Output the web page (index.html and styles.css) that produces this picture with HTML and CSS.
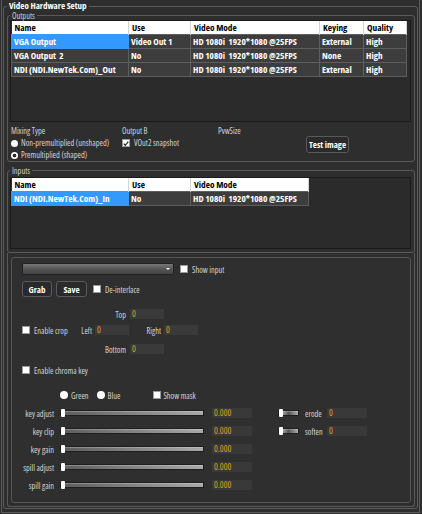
FILE: index.html
```html
<!DOCTYPE html>
<html lang="en">
<head>
  <meta charset="UTF-8" />
  <title>Video Hardware Setup</title>
  <link rel="stylesheet" href="styles.css">
</head>
<body>
  <div class="window">
    <fieldset class="setup">
      <legend>Video Hardware Setup</legend>

      <fieldset class="group outputs">
        <legend>Outputs</legend>
        <div class="grid-box outputs-box">
          <table class="grid grid-out">
            <thead>
              <tr>
                <th class="c-name">Name</th>
                <th class="c-use">Use</th>
                <th class="c-mode">Video Mode</th>
                <th class="c-key">Keying</th>
                <th class="c-quality">Quality</th>
              </tr>
            </thead>
            <tbody>
              <tr>
                <td class="selected">VGA Output</td>
                <td>Video Out 1</td>
                <td>HD 1080i&nbsp; 1920*1080 @25FPS</td>
                <td>External</td>
                <td>High</td>
              </tr>
              <tr>
                <td>VGA Output&nbsp; 2</td>
                <td>No</td>
                <td>HD 1080i&nbsp; 1920*1080 @25FPS</td>
                <td>None</td>
                <td>High</td>
              </tr>
              <tr>
                <td>NDI (NDI.NewTek.Com)_Out</td>
                <td>No</td>
                <td>HD 1080i&nbsp; 1920*1080 @25FPS</td>
                <td>External</td>
                <td>High</td>
              </tr>
            </tbody>
          </table>
        </div>

        <div class="mix-options">
          <div class="opt-col mixing">
            <div class="opt-title">Mixing Type</div>
            <div class="opt-row"><span class="radio"></span>Non-premultiplied (unshaped)</div>
            <div class="opt-row"><span class="radio on"></span>Premultiplied (shaped)</div>
          </div>
          <div class="opt-col output-b">
            <div class="opt-title">Output B</div>
            <div class="opt-row">
              <span class="check">
                <svg width="7" height="7" viewBox="0 0 7 7"><path d="M0.8 3.6 L2.7 5.6 L6.2 1.2" fill="none" stroke="#222" stroke-width="1.4"/></svg>
              </span>VOut2 snapshot
            </div>
          </div>
          <div class="opt-col pvw">
            <div class="opt-title">PvwSize</div>
          </div>
          <button class="btn test-btn">Test image</button>
        </div>
      </fieldset>

      <fieldset class="group inputs">
        <legend>Inputs</legend>
        <div class="grid-box inputs-box">
          <table class="grid grid-in">
            <thead>
              <tr>
                <th class="c-name">Name</th>
                <th class="c-use">Use</th>
                <th class="c-mode2">Video Mode</th>
              </tr>
            </thead>
            <tbody>
              <tr>
                <td class="selected">NDI (NDI.NewTek.Com)_In</td>
                <td>No</td>
                <td>HD 1080i&nbsp; 1920*1080 @25FPS</td>
              </tr>
            </tbody>
          </table>
        </div>
      </fieldset>

      <div class="frame">
        <div class="panel">
          <div class="row source-row">
            <div class="combo"><span class="arrow"></span></div>
            <span class="check"></span><span class="lbl">Show input</span>
          </div>

          <div class="row button-row">
            <button class="btn">Grab</button>
            <button class="btn">Save</button>
            <span class="check"></span><span class="lbl">De-interlace</span>
          </div>

          <div class="row crop-top">
            <span class="field-label wide">Top</span>
            <span class="num">0</span>
          </div>
          <div class="row crop-mid">
            <span class="check"></span><span class="lbl crop-lbl">Enable crop</span>
            <span class="field-label left-lbl">Left</span>
            <span class="num">0</span>
            <span class="field-label right-lbl">Right</span>
            <span class="num">0</span>
          </div>
          <div class="row crop-bottom">
            <span class="field-label wide">Bottom</span>
            <span class="num">0</span>
          </div>

          <div class="row chroma-row">
            <span class="check"></span><span class="lbl">Enable chroma key</span>
          </div>

          <div class="row color-row">
            <span class="radio"></span><span class="lbl">Green</span>
            <span class="radio blue"></span><span class="lbl">Blue</span>
            <span class="check mask"></span><span class="lbl">Show mask</span>
          </div>

          <div class="sliders">
            <div class="slider-row">
              <span class="slider-label">key adjust</span>
              <span class="track"><span class="thumb"></span></span>
              <span class="value">0.000</span>
              <span class="track small"><span class="thumb"></span></span>
              <span class="small-label">erode</span>
              <span class="value small-value">0</span>
            </div>
            <div class="slider-row">
              <span class="slider-label">key clip</span>
              <span class="track"><span class="thumb"></span></span>
              <span class="value">0.000</span>
              <span class="track small"><span class="thumb"></span></span>
              <span class="small-label">soften</span>
              <span class="value small-value">0</span>
            </div>
            <div class="slider-row">
              <span class="slider-label">key gain</span>
              <span class="track"><span class="thumb"></span></span>
              <span class="value">0.000</span>
            </div>
            <div class="slider-row">
              <span class="slider-label">spill adjust</span>
              <span class="track"><span class="thumb"></span></span>
              <span class="value">0.000</span>
            </div>
            <div class="slider-row">
              <span class="slider-label">spill gain</span>
              <span class="track"><span class="thumb"></span></span>
              <span class="value">0.000</span>
            </div>
          </div>
        </div>
      </div>
    </fieldset>
  </div>
</body>
</html>
```

FILE: styles.css
```css
* {
  box-sizing: border-box;
}

body {
  margin: 0;
  background-color: #2e2e2e;
  font-family: "Open Sans", "Liberation Sans", sans-serif;
  font-stretch: 82%;
  font-size: 8.3px;
  color: #d4d4d4;
}

.window {
  margin-left: 1px;
  width: 419px;
  height: 513px;
  padding: 1px;
  border: 1px solid #5c5c5c;
  border-top: none;
}

fieldset {
  margin: 0;
  min-width: 0;
}

.setup {
  border: 1px solid #5c5c5c;
  border-radius: 3px;
  padding: 0 2px 1px 3px;
}

.setup > legend {
  padding: 0 2px;
  font-size: 9px;
  font-weight: bold;
  line-height: 10px;
  color: #fff;
}

.group {
  border: 1px solid #5a5a5a;
  border-radius: 3px;
  padding: 0 3px 0 2px;
}

.group > legend {
  padding: 0 2px;
  line-height: 9px;
  color: #cfcfcf;
}

.inputs {
  margin-top: 4px;
  padding-bottom: 3px;
}

/* data grids */
.grid-box {
  background-color: #2b2b2b;
  border: 1px solid #1a1a1a;
}

.outputs-box {
  height: 102px;
}

.inputs-box {
  height: 72px;
  margin-top: 2px;
}

.grid {
  border-collapse: collapse;
  table-layout: fixed;
  font-size: 9.3px;
  font-weight: bold;
}

.grid-out { width: 395px; }
.grid-in { width: 297px; }

.grid th {
  height: 13px;
  padding: 0 0 0 3px;
  background-color: #fff;
  color: #000;
  text-align: left;
  border-right: 1px solid #d4d4d4;
  white-space: nowrap;
  overflow: hidden;
}

.grid td {
  height: 13px;
  padding: 0 0 0 2px;
  background-color: #3d3d3d;
  color: #fff;
  border: 1px solid #5e5e5e;
  white-space: nowrap;
  overflow: hidden;
}

.grid td.selected {
  background-color: #3399ff;
  border-color: #3399ff;
}

.c-name { width: 117px; }
.c-use { width: 62px; }
.c-mode { width: 129px; }
.c-mode2 { width: 118px; }
.c-key { width: 44px; }
.c-quality { width: 43px; }

/* mixing options */
.mix-options {
  display: flex;
  height: 39px;
  padding-top: 3px;
  padding-left: 1px;
}

.opt-title,
.opt-row {
  height: 12px;
  line-height: 12px;
  white-space: nowrap;
}

.opt-row {
  display: flex;
  align-items: center;
}

.mixing { width: 111px; }
.output-b { width: 96px; }
.pvw { width: 88px; }

.test-btn {
  align-self: flex-start;
  margin-top: 11px;
  width: 43px;
  height: 17px;
  white-space: nowrap;
}

/* small controls */
.radio {
  display: inline-block;
  flex: none;
  width: 7px;
  height: 7px;
  margin-right: 3px;
  border-radius: 50%;
  background-color: #fff;
}

.radio.on {
  background: radial-gradient(circle, #2e2e2e 0 1.6px, #fff 2.2px);
}

.check {
  display: inline-flex;
  flex: none;
  align-items: center;
  justify-content: center;
  width: 8px;
  height: 8px;
  margin-right: 4px;
  background-color: #fff;
  border: 1px solid #9a9a9a;
}

.btn {
  padding: 0;
  background-color: #2a2a2a;
  border: 1px solid #5a5a5a;
  border-radius: 3px;
  color: #fff;
  font-family: inherit;
  font-stretch: inherit;
  font-size: 9px;
  font-weight: bold;
}

/* lower panel */
.frame {
  border: 1px solid #5a5a5a;
  border-top: none;
  border-radius: 0 0 3px 3px;
  padding: 4px 3px 3px 3px;
}

.panel {
  height: 246px;
  padding-left: 10px;
  border: 1px solid #565656;
  border-radius: 3px;
  background-color: #2f2f2f;
}

.row {
  display: flex;
  align-items: center;
  height: 12px;
  white-space: nowrap;
}

.source-row { margin-top: 5px; }

.combo {
  display: flex;
  align-items: center;
  justify-content: flex-end;
  width: 152px;
  height: 12px;
  margin-right: 6px;
  padding-right: 3px;
  border: 1px solid #222;
  border-radius: 2px;
  background: linear-gradient(#777, #555 50%, #444);
}

.arrow {
  border-left: 2px solid transparent;
  border-right: 2px solid transparent;
  border-top: 2px solid #fff;
}

.button-row {
  height: 16px;
  margin-top: 6px;
}

.button-row .btn {
  height: 16px;
  margin-right: 4px;
}

.button-row .btn:first-child { width: 30px; }
.button-row .btn:nth-child(2) { width: 31px; margin-right: 6px; }

.crop-top { margin-top: 11px; }
.crop-mid { margin-top: 4px; }
.crop-bottom { margin-top: 7px; }

.field-label {
  text-align: right;
  margin-right: 4px;
}

.field-label.wide {
  width: 36px;
  margin-left: 68px;
}

.crop-lbl { width: 44px; }
.left-lbl { width: 14px; margin-right: 3px; }
.right-lbl { width: 32px; margin-right: 3px; }

.num {
  width: 34px;
  height: 10px;
  padding-left: 2px;
  line-height: 10px;
  background-color: #3a3a3a;
  color: #d9a21b;
  font-size: 9px;
}

.chroma-row { margin-top: 9px; }

.color-row {
  margin-top: 13px;
  padding-left: 38px;
}

.color-row .radio {
  width: 8px;
  height: 8px;
}

.color-row .blue { margin-left: 8px; }
.color-row .mask { margin-left: 33px; margin-right: 2px; }

/* sliders */
.sliders {
  display: flex;
  flex-direction: column;
  gap: 6px;
  margin-top: 6px;
}

.slider-row {
  display: flex;
  align-items: center;
  height: 12px;
}

.slider-label {
  width: 32px;
  text-align: right;
  white-space: nowrap;
}

.track {
  display: flex;
  align-items: center;
  width: 144px;
  height: 6px;
  margin-left: 6px;
  border: 1px solid #1e1e1e;
  background: linear-gradient(90deg, #5c5c5c, #a9a9a9);
  box-shadow: inset 0 1px 0 rgba(255,255,255,0.25);
}

.thumb {
  width: 4px;
  height: 8px;
  background-color: #fff;
  border-radius: 1px;
}

.value {
  width: 40px;
  height: 10px;
  margin-left: 8px;
  padding-left: 2px;
  line-height: 10px;
  background-color: #393939;
  color: #d9a21b;
  font-size: 9px;
}

.track.small {
  width: 21px;
  margin-left: 26px;
  background: linear-gradient(90deg, #d0d0d0, #555 50%, #aaa);
}

.small-label {
  width: 22px;
  margin-left: 6px;
}

.small-value {
  margin-left: 0;
}
```
